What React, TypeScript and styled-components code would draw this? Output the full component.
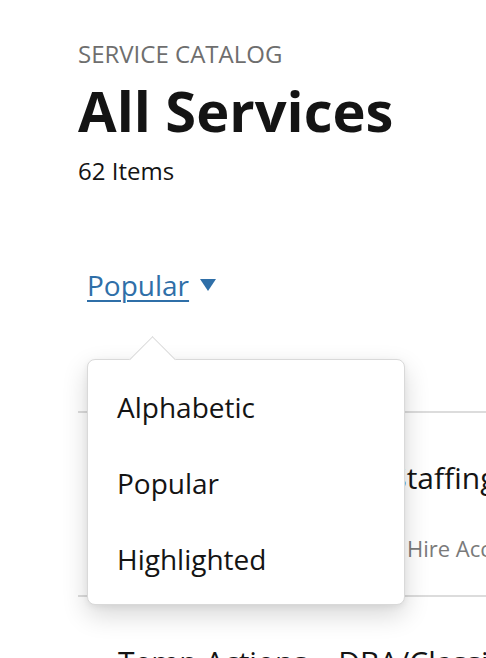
import React from "react";
import styled, { createGlobalStyle } from "styled-components";

const GlobalStyle = createGlobalStyle`
  html, body {
    margin: 0;
    padding: 0;
    background: #ffffff;
    font-family: "Open Sans", "Noto Sans", sans-serif;
    overflow: hidden;
  }
`;

const Page = styled.div`
  width: 486px;
  height: 658px;
  overflow: hidden;
  padding: 40px 0 0 78px;
  box-sizing: border-box;
  color: #141414;
`;

const Eyebrow = styled.div`
  font-size: 24px;
  line-height: 28px;
  color: #6e6e6e;
  text-transform: uppercase;
`;

const Title = styled.h1`
  margin: 10px 0 0;
  font-size: 56px;
  line-height: 64px;
  font-weight: 700;
  color: #141414;
`;

const Count = styled.div`
  margin-top: 15px;
  font-size: 24px;
  line-height: 28px;
  color: #141414;
`;

const SortArea = styled.div`
  position: relative;
  margin: 82px 0 0 9px;
  height: 36px;
`;

const SortButton = styled.button`
  display: inline-flex;
  align-items: center;
  gap: 11px;
  padding: 0;
  border: 0;
  background: none;
  font-family: inherit;
  font-size: 28px;
  line-height: 36px;
  color: #2f6fa8;
  cursor: pointer;
`;

const SortLabel = styled.span`
  text-decoration: underline;
  text-decoration-thickness: 2px;
  text-underline-offset: 4px;
`;

const Menu = styled.ul`
  position: absolute;
  z-index: 5;
  top: 92px;
  left: 0;
  width: 318px;
  margin: 0;
  padding: 9px 0 7px;
  list-style: none;
  box-sizing: border-box;
  background: #ffffff;
  border: 1px solid #d9d9d9;
  border-radius: 8px;
  box-shadow: 0 10px 26px rgba(0, 0, 0, 0.16), 0 2px 6px rgba(0, 0, 0, 0.06);

  &::before {
    content: "";
    position: absolute;
    top: -17px;
    left: 48px;
    width: 32px;
    height: 32px;
    background: #ffffff;
    border-top: 1px solid #d9d9d9;
    border-left: 1px solid #d9d9d9;
    transform: rotate(45deg);
  }
`;

const MenuItem = styled.li`
  position: relative;
  padding: 19px 29px;
  font-size: 28px;
  line-height: 38px;
  color: #141414;
  cursor: pointer;
`;

const List = styled.div`
  margin-top: 108px;
`;

const Row = styled.div`
  border-top: 2px solid #dcdcdc;
  padding: 46px 0 34px 40px;
  white-space: nowrap;
`;

const RowTitle = styled.div`
  font-size: 30px;
  line-height: 38px;
  color: #141414;
`;

const RowSub = styled.div`
  margin-top: 38px;
  font-size: 22px;
  line-height: 26px;
  color: #7a7a7a;
`;

const Caret = () => (
  <svg width="16" height="12" viewBox="0 0 16 12" aria-hidden="true">
    <path d="M0 0 H16 L8 12 Z" fill="#2f6fa8" />
  </svg>
);

export default function App() {
  return (
    <>
      <GlobalStyle />
      <Page>
        <Eyebrow>Service Catalog</Eyebrow>
        <Title>All Services</Title>
        <Count>62 Items</Count>
        <SortArea>
          <SortButton>
            <SortLabel>Popular</SortLabel>
            <Caret />
          </SortButton>
          <Menu>
            <MenuItem>Alphabetic</MenuItem>
            <MenuItem>Popular</MenuItem>
            <MenuItem>Highlighted</MenuItem>
          </Menu>
        </SortArea>
        <List>
          <Row>
            <RowTitle>Temporary Worker Staffing</RowTitle>
            <RowSub>Request temporary staff via Hire Access</RowSub>
          </Row>
          <Row>
            <RowTitle>Temp Actions – DBA/Classified</RowTitle>
            <RowSub>Update an existing temporary appointment</RowSub>
          </Row>
        </List>
      </Page>
    </>
  );
}
